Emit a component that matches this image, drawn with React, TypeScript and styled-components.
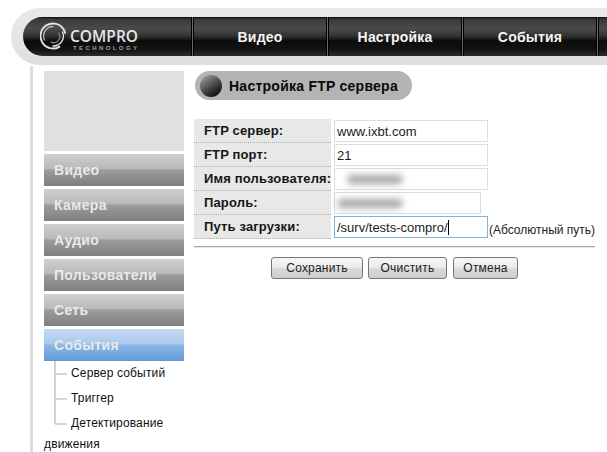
import styled, { createGlobalStyle } from "styled-components";

const GlobalStyle = createGlobalStyle`
  html, body {
    margin: 0;
    padding: 0;
    background: #fff;
    font-family: "Liberation Sans", Arial, sans-serif;
  }
`
const Page = styled.div`
  width: 607px;
  height: 452px;
  overflow: hidden;
  padding: 8px 0 0 11px;
  box-sizing: border-box;
`
const HeaderShell = styled.div`
  height: 57px;
  background: linear-gradient(#e8e8e8, #e4e4e4 70%, #dedede);
  border-radius: 29px 0 0 29px;
  padding: 9px 0 0 12px;
  box-sizing: border-box;
`
const NavBar = styled.div`
  height: 39px;
  display: flex;
  border-radius: 20px 0 0 20px;
  background: linear-gradient(#0d0d0d 0, #3a3a3a 6%, #4a4a4a 30%, #333 48%, #0b0b0b 62%, #141414 85%, #2c2c2c 100%);
  overflow: hidden;
`
const LogoBox = styled.div`
  width: 169px;
  flex: none;
  display: flex;
  align-items: center;
  padding-left: 17px;
  box-sizing: border-box;
`
const NavItem = styled.div`
  width: 135px;
  flex: none;
  box-sizing: border-box;
  border-left: 1px solid #6a6a6a;
  box-shadow: inset 1px 0 0 #000, -1px 0 0 #000;
  display: flex;
  align-items: center;
  justify-content: center;
  color: #f4f4f4;
  font-size: 14px;
  font-weight: bold;
  letter-spacing: 0.2px;
`
const Body = styled.div`
  display: flex;
  margin: 1px 0 0 19px;
  height: 400px;
  border-left: 3px solid #dedede;
  padding: 5px 0 0 11px;
`
const Sidebar = styled.div`
  width: 140px;
  flex: none;
  margin-right: 10px;
`
const Banner = styled.div`
  height: 80px;
  background: #e0e0e0;
  margin-bottom: 3px;
`
const MenuItem = styled.div<{ $active?: boolean }>`
  height: 32px;
  margin-bottom: 3px;
  box-sizing: border-box;
  padding-left: 10px;
  line-height: 32px;
  font-size: 14px;
  font-weight: bold;
  letter-spacing: 0.3px;
  color: #e9e9e9;
  background: ${(props) =>
    props.$active
      ? "linear-gradient(#c4daf3 0, #a9c9ed 46%, #8db7e6 50%, #5e99d9 100%)"
      : "linear-gradient(#d0d0d0 0, #b9b9b9 46%, #9c9c9c 50%, #7f7f7f 100%)"};
`
const SubMenu = styled.div`
  margin-top: -3px;
  position: relative;
  font-size: 12px;
  letter-spacing: 0.15px;
  color: #111;
`
const SubLine = styled.div`
  position: absolute;
  left: 10px;
  top: 0;
  width: 2px;
  height: 63px;
  background: #cfcfcf;
`
const SubItem = styled.div`
  height: 25px;
  line-height: 25px;
  padding-left: 27px;
  position: relative;
  white-space: nowrap;
  &:first-of-type { margin-top: 2px; }
  &::before {
    content: "";
    position: absolute;
    left: 11px;
    top: 12px;
    width: 12px;
    height: 2px;
    background: #d6d6d6;
  }
`
const SubWrap = styled.div`
  line-height: 14px;
  padding-top: 1px;
`
const Main = styled.div`
  flex: none;
  width: 402px;
`
const TitlePill = styled.div`
  width: 217px;
  height: 29px;
  margin-left: 1px;
  box-sizing: border-box;
  background: #b4b4b4;
  border-radius: 15px;
  display: flex;
  align-items: center;
  padding-left: 5px;
  gap: 7px;
  font-size: 14px;
  font-weight: bold;
  letter-spacing: 0.25px;
  color: #0a0a0a;
`
const Dot = styled.span`
  width: 22px;
  height: 22px;
  border-radius: 50%;
  background: linear-gradient(145deg, #9a9a9a 8%, #555 45%, #0c0c0c 88%);
`
const Form = styled.div`
  margin-top: 19px;
  display: flex;
  flex-direction: column;
`
const Row = styled.div`
  display: flex;
  height: 24px;
`
const Label = styled.div`
  width: 137px;
  flex: none;
  box-sizing: border-box;
  background: #e8e8e8;
  border-bottom: 1px dotted #aaa;
  padding: 1px 0 0 10px;
  font-size: 13px;
  line-height: 22px;
  font-weight: bold;
  letter-spacing: 0.15px;
  color: #161616;
  white-space: nowrap;
`
const Field = styled.div<{ $short?: boolean; $focus?: boolean }>`
  width: ${(props) => (props.$short ? "147px" : "154px")};
  height: 22px;
  margin: 1px 0 0 3px;
  box-sizing: border-box;
  border: 1px solid ${(props) => (props.$focus ? "#7fb2dc" : "#dcdcdc")};
  padding: 1px 0 0 2px;
  font-size: 13px;
  line-height: 20px;
  color: #1c1c1c;
  flex: none;
  white-space: nowrap;
`
const Blurred = styled.span<{ $width: string; $indent: string }>`
  display: inline-block;
  width: ${(props) => props.$width};
  height: 9px;
  margin: 5px 0 0 ${(props) => props.$indent};
  background: #a6a6a6;
  filter: blur(3.5px);
  vertical-align: top;
`
const Caret = styled.span`
  display: inline-block;
  width: 1px;
  height: 15px;
  background: #000;
  vertical-align: -3px;
`
const Hint = styled.span`
  font-size: 12px;
  line-height: 24px;
  margin: 3px 0 0 1px;
  color: #222;
  white-space: nowrap;
`
const Divider = styled.div`
  height: 1px;
  background: #a8a8a8;
  border-bottom: 1px solid #e4e4e4;
  margin-top: 7px;
  width: 401px;
`
const Buttons = styled.div`
  display: flex;
  margin: 9px 0 0 77px;
`
const Button = styled.button<{ $width: number; $gap?: number }>`
  width: ${(props) => props.$width}px;
  height: 22px;
  margin-right: ${(props) => props.$gap ?? 5}px;
  padding: 0;
  box-sizing: border-box;
  border: 1px solid #777;
  border-radius: 3px;
  background: linear-gradient(#f6f6f6, #ececec 45%, #d8d8d8 55%, #cfcfcf);
  font-family: inherit;
  font-size: 12px;
  letter-spacing: 0.2px;
  color: #222;
`

function Logo() {
    return (
        <svg width="100" height="31" viewBox="0 0 100 31" fill="none" strokeLinecap="round">
            <circle cx="13" cy="15" r="12.5" stroke="#e2e2e2" strokeWidth="1.9" strokeDasharray="62 17" transform="rotate(60 13 15)" />
            <path d="M4.5 19a9.5 9.5 0 0 1 8.5-13.5" stroke="#b8b8b8" strokeWidth="1.3" />
            <path d="M22.5 11a10 10 0 0 1-9.5 14" stroke="#ececec" strokeWidth="1.3" />
            <path d="M18.5 12a6 6 0 0 1-7.5 9" stroke="#909090" strokeWidth="1.1" />
            <text x="30" y="21" fontFamily="Open Sans, Liberation Sans, sans-serif" fontSize="15.5" fontWeight="600" fill="#e6e6e6" textLength="68">COMPRO</text>
            <text x="33" y="28.5" fontFamily="Liberation Sans, sans-serif" fontSize="6" fontWeight="700" fill="#a0a0a0" textLength="64">TECHNOLOGY</text>
        </svg>
    )
}

const navItems = ["Видео", "Настройка", "События", ""]
const menuItems = ["Видео", "Камера", "Аудио", "Пользователи", "Сеть"]

function App() {
    return (
        <Page>
            <GlobalStyle />
            <HeaderShell>
                <NavBar>
                    <LogoBox>
                        <Logo />
                    </LogoBox>
                    {navItems.map((item) => (
                        <NavItem key={item}>{item}</NavItem>
                    ))}
                </NavBar>
            </HeaderShell>
            <Body>
                <Sidebar>
                    <Banner />
                    {menuItems.map((item) => (
                        <MenuItem key={item}>{item}</MenuItem>
                    ))}
                    <MenuItem $active>События</MenuItem>
                    <SubMenu>
                        <SubLine />
                        <SubItem>Сервер событий</SubItem>
                        <SubItem>Триггер</SubItem>
                        <SubItem>Детектирование</SubItem>
                        <SubWrap>движения</SubWrap>
                    </SubMenu>
                </Sidebar>
                <Main>
                    <TitlePill>
                        <Dot />
                        Настройка FTP сервера
                    </TitlePill>
                    <Form>
                        <Row>
                            <Label>FTP сервер:</Label>
                            <Field>www.ixbt.com</Field>
                        </Row>
                        <Row>
                            <Label>FTP порт:</Label>
                            <Field>21</Field>
                        </Row>
                        <Row>
                            <Label>Имя пользователя:</Label>
                            <Field><Blurred $width="54px" $indent="11px" /></Field>
                        </Row>
                        <Row>
                            <Label>Пароль:</Label>
                            <Field $short><Blurred $width="64px" $indent="1px" /></Field>
                        </Row>
                        <Row>
                            <Label>Путь загрузки:</Label>
                            <Field $focus>/surv/tests-compro/<Caret /></Field>
                            <Hint>(Абсолютный путь)</Hint>
                        </Row>
                    </Form>
                    <Divider />
                    <Buttons>
                        <Button $width={92}>Сохранить</Button>
                        <Button $width={79} $gap={6}>Очистить</Button>
                        <Button $width={65}>Отмена</Button>
                    </Buttons>
                </Main>
            </Body>
        </Page>
    )
}
export default App
